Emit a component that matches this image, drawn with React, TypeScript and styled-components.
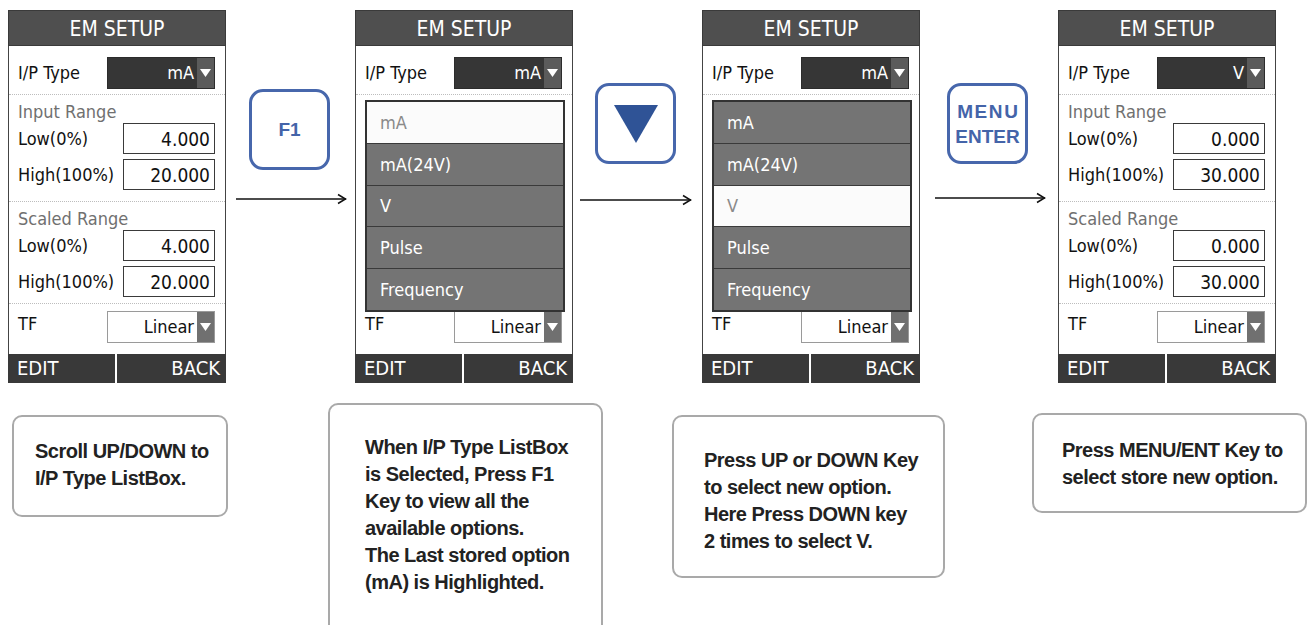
import React from "react";
import styled, { createGlobalStyle } from "styled-components";

const GlobalStyle = createGlobalStyle`
  html, body {
    margin: 0;
    padding: 0;
    background: #ffffff;
    overflow: hidden;
  }
`;

const OPTIONS = ["mA", "mA(24V)", "V", "Pulse", "Frequency"];

type ScreenData = {
  type: string;
  input: [string, string];
  scaled: [string, string];
  listIndex?: number;
};

const screens: ScreenData[] = [
  { type: "mA", input: ["4.000", "20.000"], scaled: ["4.000", "20.000"] },
  { type: "mA", input: ["4.000", "20.000"], scaled: ["4.000", "20.000"], listIndex: 0 },
  { type: "mA", input: ["4.000", "20.000"], scaled: ["4.000", "20.000"], listIndex: 2 },
  { type: "V", input: ["0.000", "30.000"], scaled: ["0.000", "30.000"] },
];

const Page = styled.div`
  width: 1308px;
  height: 625px;
  padding-top: 10px;
  box-sizing: border-box;
  overflow: hidden;
`;

const TopRow = styled.div`
  display: flex;
  align-items: flex-start;
  padding-left: 8px;
`;

const BottomRow = styled.div`
  display: flex;
  align-items: flex-start;
`;

/* ---------- device screen ---------- */

const Screen = styled.div`
  width: 218px;
  flex: none;
  display: flex;
  flex-direction: column;
  font-family: "DejaVu Sans Condensed", "DejaVu Sans", sans-serif;
  font-stretch: condensed;
  font-size: 18px;
  color: #111;
`;

const Header = styled.div`
  height: 36px;
  line-height: 36px;
  background: #4f4f4f;
  color: #fff;
  font-size: 21px;
  text-align: center;
  border: 1px solid #3a3a3a;
  box-sizing: border-box;
`;

const Body = styled.div`
  position: relative;
  background: #fff;
  border-left: 1px solid #444;
  border-right: 1px solid #444;
`;

const TypeRow = styled.div`
  height: 49px;
  box-sizing: border-box;
  padding: 11px 10px 0 9px;
  display: flex;
  justify-content: space-between;
  align-items: flex-start;
  border-bottom: 1px dotted #bdbdbd;
`;

const Label = styled.span<{ $lh?: number }>`
  line-height: ${(p) => p.$lh ?? 32}px;
  white-space: nowrap;
`;

const Select = styled.div<{ $dark?: boolean }>`
  width: 108px;
  height: 32px;
  box-sizing: border-box;
  display: flex;
  background: ${(p) => (p.$dark ? "#363636" : "#ffffff")};
  border: 1px solid ${(p) => (p.$dark ? "#2c2c2c" : "#9a9a9a")};
  color: ${(p) => (p.$dark ? "#ffffff" : "#111111")};
`;

const SelectValue = styled.span`
  flex: 1;
  text-align: right;
  padding-right: 3px;
  line-height: 30px;
`;

const SelectArrow = styled.span<{ $dark?: boolean }>`
  width: 17px;
  display: flex;
  align-items: center;
  justify-content: center;
  background: ${(p) => (p.$dark ? "#5b5b5b" : "#707070")};
`;

/* sections under an open list box are covered, so they are not painted */
const Section = styled.div<{ $h: number; $covered?: boolean }>`
  height: ${(p) => p.$h}px;
  box-sizing: border-box;
  padding: 6px 10px 0 9px;
  display: flex;
  flex-direction: column;
  border-bottom: 1px dotted #bdbdbd;
  visibility: ${(p) => (p.$covered ? "hidden" : "visible")};
`;

const SectionTitle = styled.div`
  color: #707070;
  line-height: 22px;
`;

const FieldRow = styled.div`
  height: 31px;
  margin-bottom: 5px;
  display: flex;
  justify-content: space-between;
  align-items: center;
`;

const ValueBox = styled.div`
  width: 92px;
  height: 31px;
  box-sizing: border-box;
  border: 1px solid #3a3a3a;
  text-align: right;
  padding-right: 4px;
  line-height: 31px;
  font-size: 19px;
`;

const TFRow = styled.div`
  height: 50px;
  box-sizing: border-box;
  padding: 7px 10px 0 9px;
  display: flex;
  justify-content: space-between;
  align-items: flex-start;
`;

const Footer = styled.div`
  height: 29px;
  display: flex;
  background: #393939;
  color: #fff;
  font-size: 20px;
  line-height: 29px;
`;

const SoftKey = styled.div<{ $right?: boolean }>`
  flex: ${(p) => (p.$right ? 1 : "none")};
  width: ${(p) => (p.$right ? "auto" : "109px")};
  box-sizing: border-box;
  text-align: ${(p) => (p.$right ? "right" : "left")};
  padding: ${(p) => (p.$right ? "0 6px 0 0" : "0 0 0 9px")};
  border-right: ${(p) => (p.$right ? "none" : "2px solid #ffffff")};
`;

const ListBox = styled.div`
  position: absolute;
  top: 54px;
  left: 9px;
  right: 7px;
  height: 212px;
  box-sizing: border-box;
  border: 2px solid #333;
  background: #747474;
  display: flex;
  flex-direction: column;
  z-index: 1;
`;

const ListItem = styled.div<{ $active?: boolean }>`
  flex: 1;
  display: flex;
  align-items: center;
  padding-left: 13px;
  background: ${(p) => (p.$active ? "#fbfbfb" : "#747474")};
  color: ${(p) => (p.$active ? "#8a8a8a" : "#ffffff")};
  & + & {
    border-top: 1px solid #3a3a3a;
  }
`;

const DownTri = () => (
  <svg width="11" height="8" viewBox="0 0 11 8">
    <polygon points="0,0 11,0 5.5,8" fill="#ffffff" />
  </svg>
);

const Device: React.FC<{ data: ScreenData }> = ({ data }) => {
  const open = data.listIndex !== undefined;
  return (
    <Screen>
      <Header>EM SETUP</Header>
      <Body>
        <TypeRow>
          <Label>I/P Type</Label>
          <Select $dark>
            <SelectValue>{data.type}</SelectValue>
            <SelectArrow $dark>
              <DownTri />
            </SelectArrow>
          </Select>
        </TypeRow>
        <Section $h={107} $covered={open}>
          <SectionTitle>Input Range</SectionTitle>
          <FieldRow>
            <Label>Low(0%)</Label>
            <ValueBox>{data.input[0]}</ValueBox>
          </FieldRow>
          <FieldRow>
            <Label>High(100%)</Label>
            <ValueBox>{data.input[1]}</ValueBox>
          </FieldRow>
        </Section>
        <Section $h={102} $covered={open}>
          <SectionTitle>Scaled Range</SectionTitle>
          <FieldRow>
            <Label>Low(0%)</Label>
            <ValueBox>{data.scaled[0]}</ValueBox>
          </FieldRow>
          <FieldRow>
            <Label>High(100%)</Label>
            <ValueBox>{data.scaled[1]}</ValueBox>
          </FieldRow>
        </Section>
        <TFRow>
          <Label $lh={26}>TF</Label>
          <Select>
            <SelectValue>Linear</SelectValue>
            <SelectArrow>
              <DownTri />
            </SelectArrow>
          </Select>
        </TFRow>
        {open && (
          <ListBox>
            {OPTIONS.map((o, i) => (
              <ListItem key={o} $active={i === data.listIndex}>
                {o}
              </ListItem>
            ))}
          </ListBox>
        )}
      </Body>
      <Footer>
        <SoftKey>EDIT</SoftKey>
        <SoftKey $right>BACK</SoftKey>
      </Footer>
    </Screen>
  );
};

/* ---------- key + arrow between screens ---------- */

const Connector = styled.div<{ $w: number; $top: number }>`
  width: ${(p) => p.$w}px;
  flex: none;
  padding-top: ${(p) => p.$top}px;
  display: flex;
  flex-direction: column;
  align-items: flex-start;
`;

const Key = styled.div<{ $x: number }>`
  margin-left: ${(p) => p.$x}px;
  width: 81px;
  height: 81px;
  box-sizing: border-box;
  border: 3px solid #4767ac;
  border-radius: 14px;
  background: #fff;
  display: flex;
  flex-direction: column;
  align-items: center;
  justify-content: center;
  color: #4464a9;
  font-family: "Liberation Sans", Arial, sans-serif;
  font-weight: bold;
  font-size: 19px;
  line-height: 25px;
`;

const KeyWide = styled.span`
  letter-spacing: 1.6px;
  margin-right: -1.6px;
`;

const ArrowWrap = styled.div<{ $x: number; $gap: number }>`
  margin-left: ${(p) => p.$x}px;
  margin-top: ${(p) => p.$gap}px;
  display: flex;
`;

const Arrow: React.FC<{ w: number }> = ({ w }) => (
  <svg width={w} height="12" viewBox={`0 0 ${w} 12`}>
    <line x1="0" y1="6" x2={w - 1} y2="6" stroke="#111" strokeWidth="1.5" />
    <polyline
      points={`${w - 9},1.5 ${w - 1.5},6 ${w - 9},10.5`}
      fill="none"
      stroke="#111"
      strokeWidth="1.5"
    />
  </svg>
);

/* ---------- explanation notes ---------- */

const Note = styled.div<{ $x: number; $top: number; $w: number; $h: number; $pt: number; $pl: number }>`
  margin-left: ${(p) => p.$x}px;
  margin-top: ${(p) => p.$top}px;
  width: ${(p) => p.$w}px;
  height: ${(p) => p.$h}px;
  flex: none;
  box-sizing: border-box;
  padding: ${(p) => p.$pt}px 0 0 ${(p) => p.$pl}px;
  border: 2px solid #a9a9a9;
  border-radius: 10px;
  font-family: "Liberation Sans", Arial, sans-serif;
  font-weight: bold;
  font-size: 20px;
  letter-spacing: -0.5px;
  line-height: 27px;
  color: #222;
  white-space: pre-line;
`;

const App: React.FC = () => (
  <>
    <GlobalStyle />
    <Page>
      <TopRow>
        <Device data={screens[0]} />
        <Connector $w={129} $top={79}>
          <Key $x={23}>F1</Key>
          <ArrowWrap $x={10} $gap={23}>
            <Arrow w={111} />
          </ArrowWrap>
        </Connector>
        <Device data={screens[1]} />
        <Connector $w={129} $top={73}>
          <Key $x={22}>
            <svg width="44" height="38" viewBox="0 0 44 38">
              <polygon points="0,0 44,0 22,38" fill="#2f5396" />
            </svg>
          </Key>
          <ArrowWrap $x={7} $gap={30}>
            <Arrow w={112} />
          </ArrowWrap>
        </Connector>
        <Device data={screens[2]} />
        <Connector $w={138} $top={73}>
          <Key $x={27}>
            <KeyWide>MENU</KeyWide>
            <span>ENTER</span>
          </Key>
          <ArrowWrap $x={15} $gap={28}>
            <Arrow w={111} />
          </ArrowWrap>
        </Connector>
        <Device data={screens[3]} />
      </TopRow>
      <BottomRow>
        <Note $x={12} $top={32} $w={216} $h={102} $pt={21} $pl={21}>
          {"Scroll UP/DOWN to\nI/P Type ListBox."}
        </Note>
        <Note $x={100} $top={20} $w={275} $h={240} $pt={29} $pl={35}>
          {
            "When I/P Type ListBox\nis Selected, Press F1\nKey to view all the\navailable options.\nThe Last stored option\n(mA) is Highlighted."
          }
        </Note>
        <Note $x={69} $top={32} $w={273} $h={163} $pt={30} $pl={30}>
          {"Press UP or DOWN Key\nto select new option.\nHere Press DOWN key\n2 times to select V."}
        </Note>
        <Note $x={87} $top={30} $w={275} $h={100} $pt={22} $pl={28}>
          {"Press MENU/ENT Key to\nselect store new option."}
        </Note>
      </BottomRow>
    </Page>
  </>
);

export default App;
